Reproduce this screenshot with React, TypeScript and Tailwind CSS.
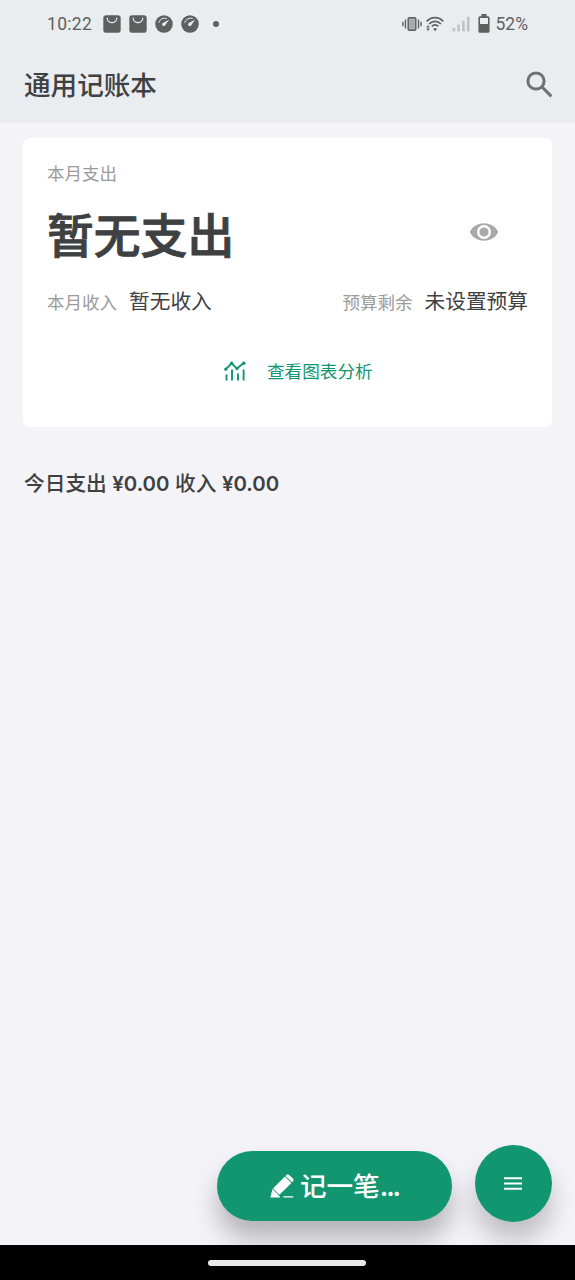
import React from 'react';

const BagIcon = () => (
  <svg width="18" height="18" viewBox="0 0 18 18">
    <rect x="0.3" y="0.3" width="17.4" height="17.4" rx="2.8" fill="#5e6060" />
    <path d="M4.2 3a4.8 4.6 0 0 0 9.6 0" fill="none" stroke="#e9edf0" strokeWidth="1.2" strokeLinecap="round" />
  </svg>
);

const GaugeIcon = () => (
  <svg width="18" height="18" viewBox="0 0 18 18">
    <circle cx="9" cy="9" r="8.8" fill="#5e6060" />
    <path d="M3.8 7.4A5.8 5.800 0 0 1 11.400 3.400" fill="none" stroke="#e9edf0" strokeWidth="1" strokeLinecap="round" />
    <path d="M14.200 4.400 10.400 10a1.700 1.700 0 1 1-2.400-2.100z" fill="#e9edf0" />
  </svg>
);

const VibrateIcon = () => (
  <svg width="20" height="16" viewBox="0 0 20 16" fill="none" stroke="#5e6060" strokeWidth="1.4">
    <rect x="6.2" y="1.7" width="7.6" height="12.6" rx="1" fill="#a9acad" />
    <path d="M3.5 3.5v9M1 5.8v4.4M16.5 3.5v9M19 5.8v4.4" />
  </svg>
);

const WifiIcon = () => (
  <svg width="18" height="16" viewBox="0 0 18 16" fill="none" stroke="#5e6060" strokeWidth="1.7">
    <path d="M0.7 5.3C5.4 0.3 12.6 0.3 17.3 5.3" />
    <path d="M3.1 8C6.5 4.4 11.5 4.4 14.9 8" />
    <path d="M5.8 10.4c2-2 4.6-2 6.5 0" />
    <path d="M9.1 15.3 7.2 12.9a3 3 0 0 1 3.8 0z" fill="#5e6060" stroke="none" />
    <path d="M0.2 11.400 2 9l1.800 2.400zM0.200 12.600h3.600L2 15z" fill="#5e6060" stroke="none" />
  </svg>
);

const SignalIcon = () => (
  <svg width="18" height="16" viewBox="0 0 18 16" fill="#bfc2c4">
    <rect x="0.6" y="12" width="2.6" height="3.4" />
    <rect x="5.3" y="8.6" width="2.6" height="6.8" />
    <rect x="10.1" y="4.8" width="2.6" height="10.6" />
    <rect x="14.9" y="0.8" width="2.6" height="14.6" />
  </svg>
);

const BatteryIcon = () => (
  <svg width="12" height="19" viewBox="0 0 12 19" fill="#5e6060">
    <path fillRule="evenodd" d="M3.4 0h5.2v2.2H10a1.6 1.6 0 0 1 1.6 1.6v13.4a1.6 1.6 0 0 1-1.6 1.6H2a1.6 1.6 0 0 1-1.6-1.6V3.8A1.6 1.6 0 0 1 2 2.2h1.4zM2 4v6h8V4z" />
  </svg>
);

const SearchIcon = () => (
  <svg width="27" height="27" viewBox="0 0 27 27" fill="none" stroke="#6e7173" strokeWidth="3">
    <circle cx="10" cy="10" r="8.1" />
    <path d="m15.8 15.8 9.6 9.6" />
  </svg>
);

const EyeIcon = () => (
  <svg width="30" height="18" viewBox="0 0 30 18">
    <path d="M0.8 9C3 4 8.4 0.3 15 0.3S27 4 29.2 9C27 14 21.6 17.7 15 17.7S3 14 0.8 9z" fill="#a8a8a8" />
    <circle cx="15" cy="9" r="5.8" fill="#a8a8a8" stroke="#fff" strokeWidth="2.4" />
  </svg>
);

const ChartIcon = () => (
  <svg width="22" height="20" viewBox="0 0 22 20" fill="none" stroke="#129670" strokeWidth="1.9">
    <path d="m1.6 8.4 6-6 5.3 5.2L19.8 2" />
    <path d="M2.5 13.4v6M8 8.4v11M14 12.4v7M19.6 8.4v11" />
    <g fill="#129670" stroke="none">
      <circle cx="1.8" cy="8.2" r="1.6" />
      <circle cx="7.6" cy="2.2" r="1.7" />
      <circle cx="13" cy="7.6" r="1.6" />
      <circle cx="19.7" cy="2.2" r="1.8" />
    </g>
  </svg>
);

const PencilIcon = () => (
  <svg width="24" height="24" viewBox="0 0 24 24" fill="#fff">
    <path d="M16.4 0.9a2 2 0 0 1 2.800 0l3.700 3.600a2 2 0 0 1 0 2.800l-.9 1-6.500-6.400z" />
    <path d="m14.900 2.500 6.500 6.400L9.500 20.800 3 14.400z" />
    <path d="m2.500 15.100 6.400 6.200-.9.600h1.800v1.500H0.300z" />
    <path d="M13.400 22.300h9.800v1.100h-9.800z" />
  </svg>
);

const App = () => {
  return (
    <div className="flex h-[1280px] w-[575px] flex-col overflow-hidden bg-[#f3f3f8] font-['Inter','Noto_Sans_CJK_SC',sans-serif] text-[#3f4041]">
      <header className="h-[123px] bg-[#e9edf0]">
        <div className="flex h-[47px] items-center justify-between pr-[47px] pl-[47px] font-['Roboto',sans-serif] text-[17.5px] text-[#5e6060]">
          <div className="flex items-center gap-2">
            <span className="mr-[2.5px] w-[45px] pt-0.5 tracking-[0.3px]">10:22</span>
            <BagIcon />
            <BagIcon />
            <GaugeIcon />
            <GaugeIcon />
            <span className="ml-1.5 size-1.5 rounded-full bg-[#5e6060]" />
          </div>
          <div className="flex items-center">
            <VibrateIcon />
            <span className="ml-1"><WifiIcon /></span>
            <span className="ml-2"><SignalIcon /></span>
            <span className="ml-2"><BatteryIcon /></span>
            <span className="ml-1.5 pt-0.5">52%</span>
          </div>
        </div>
        <div className="flex h-[76px] items-center justify-between pr-[22px] pb-px pl-6">
          <h1 className="pt-px text-[26.6px] leading-10 font-medium">通用记账本</h1>
          <SearchIcon />
        </div>
      </header>

      <main className="flex-1 px-[23px] pt-[15px]">
        <section className="flex h-[289px] w-[529px] flex-col rounded-md bg-white px-6 pt-[23px]">
          <div className="text-[17.5px] leading-[26px] text-[#9b9b9b]">本月支出</div>
          <div className="mt-[14px] flex h-[70px] items-center justify-between pr-[29px]">
            <span className="text-[46.8px] leading-[70px] font-medium [-webkit-text-stroke:0.9px_#3f4041]">暂无支出</span>
            <span className="pb-[9px]"><EyeIcon /></span>
          </div>
          <div className="mt-[15px] flex items-center justify-between leading-[30px]">
            <div className="flex items-center gap-3">
              <span className="pt-0.5 text-[17.5px] text-[#9b9b9b]">本月收入</span>
              <span className="text-[20.7px]">暂无收入</span>
            </div>
            <div className="flex items-center gap-3">
              <span className="pt-0.5 text-[17.5px] text-[#9b9b9b]">预算剩余</span>
              <span className="text-[20.7px]">未设置预算</span>
            </div>
          </div>
          <div className="mt-[38px] flex items-center gap-[21px] pl-[177px] text-[17.6px] leading-[30px] text-[#129670]">
            <span className="pb-px"><ChartIcon /></span>
            <span className="pt-px">查看图表分析</span>
          </div>
        </section>

        <div className="mt-[42px] pl-px text-[20.7px] leading-[30px] font-medium">
          今日支出 <span className="text-[20.4px] font-semibold">¥0.00</span> 收入{' '}
          <span className="text-[20.4px] font-semibold">¥0.00</span>
        </div>
      </main>

      <div className="flex items-start justify-end gap-[23px] pr-[23px] pb-[23px]">
        <button className="mt-1.5 flex h-[70px] w-[235px] items-center justify-center gap-1.5 rounded-full bg-[#129670] text-[26.6px] font-medium text-white shadow-[0_18px_26px_rgba(0,0,0,0.26)]">
          <PencilIcon />
          <span className="pt-0.5">记一笔<span className="font-semibold tracking-[-2px]">...</span></span>
        </button>
        <button className="flex size-[77px] items-center justify-center rounded-full bg-[#129670] pr-px shadow-[0_18px_26px_rgba(0,0,0,0.22)]">
          <svg width="18" height="13" viewBox="0 0 18 13" stroke="#fff" strokeWidth="2">
            <path d="M0 1.2h18M0 6.5h18M0 11.8h18" />
          </svg>
        </button>
      </div>

      <footer className="flex h-[35px] items-center justify-center bg-black pr-px">
        <div className="h-1.5 w-[158px] rounded-full bg-[#e8e8e8]" />
      </footer>
    </div>
  );
};

export default App;
